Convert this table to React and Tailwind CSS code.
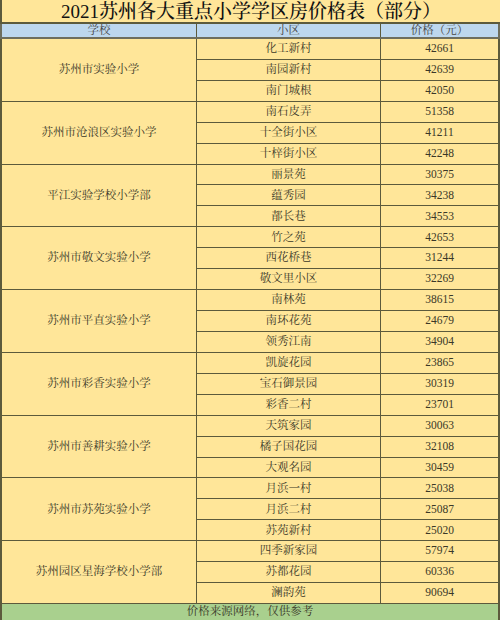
import React from 'react';

const GROUPS = [
  { school: '苏州市实验小学', rows: [['化工新村', 42661], ['南园新村', 42639], ['南门城根', 42050]] },
  { school: '苏州市沧浪区实验小学', rows: [['南石皮弄', 51358], ['十全街小区', 41211], ['十梓街小区', 42248]] },
  { school: '平江实验学校小学部', rows: [['丽景苑', 30375], ['蕴秀园', 34238], ['郬长巷', 34553]] },
  { school: '苏州市敬文实验小学', rows: [['竹之苑', 42653], ['西花桥巷', 31244], ['敬文里小区', 32269]] },
  { school: '苏州市平直实验小学', rows: [['南林苑', 38615], ['南环花苑', 24679], ['领秀江南', 34904]] },
  { school: '苏州市彩香实验小学', rows: [['凯旋花园', 23865], ['宝石御景园', 30319], ['彩香二村', 23701]] },
  { school: '苏州市善耕实验小学', rows: [['天筑家园', 30063], ['橘子国花园', 32108], ['大观名园', 30459]] },
  { school: '苏州市苏苑实验小学', rows: [['月浜一村', 25038], ['月浜二村', 25087], ['苏苑新村', 25020]] },
  { school: '苏州园区星海学校小学部', rows: [['四季新家园', 57974], ['苏都花园', 60336], ['澜韵苑', 90694]] },
];

const font = { fontFamily: '"Liberation Serif", "Noto Serif CJK SC", "Noto Sans CJK SC", serif' };

export default function App() {
  return (
    <div className="w-[500px] h-[620px] bg-[#ffe699] text-[#3a3828] text-[11.5px] overflow-hidden" style={font}>
      {/* title */}
      <div className="h-[24px] flex items-center justify-center border-l-2 border-b-2 border-[#5c5a3c] text-[#111] text-[19px] leading-none font-medium">
        2021苏州各大重点小学学区房价格表（部分）
      </div>

      {/* header */}
      <div className="h-[15px] grid grid-cols-[195px_184px_1fr] bg-[#bdd7ee] border-l-2 border-b-2 border-r-2 border-[#6e6e5e] leading-none text-[#444]">
        <div className="flex items-center justify-center border-r border-[#5c5a3c]">学校</div>
        <div className="flex items-center justify-center border-r border-[#5c5a3c]">小区</div>
        <div className="flex items-center justify-center">价格（元）</div>
      </div>

      {/* body */}
      <div className="h-[565px] grid grid-cols-[195px_184px_1fr] grid-rows-[repeat(27,minmax(0,1fr))] border-l-2 border-r-2 border-[#5c5a3c] leading-none">
        {GROUPS.map((g, gi) => (
          <React.Fragment key={g.school}>
            <div
              className="flex items-center justify-center border-r border-b border-[#5c5a3c]"
              style={{ gridRow: `${gi * 3 + 1} / span 3`, gridColumn: 1 }}
            >
              {g.school}
            </div>
            {g.rows.map(([name, price], ri) => (
              <React.Fragment key={name}>
                <div
                  className="flex items-center justify-center border-r border-b border-[#5c5a3c]"
                  style={{ gridRow: gi * 3 + ri + 1, gridColumn: 2 }}
                >
                  {name}
                </div>
                <div
                  className="flex items-center justify-center border-b border-[#5c5a3c]"
                  style={{ gridRow: gi * 3 + ri + 1, gridColumn: 3 }}
                >
                  {price}
                </div>
              </React.Fragment>
            ))}
          </React.Fragment>
        ))}
      </div>

      {/* footer */}
      <div className="h-[16px] bg-[#a9d08e] border-l-2 border-r-2 border-[#5c5a3c] flex items-center justify-center leading-none text-[#3a3828]">
        价格来源网络，仅供参考
      </div>
    </div>
  );
}
